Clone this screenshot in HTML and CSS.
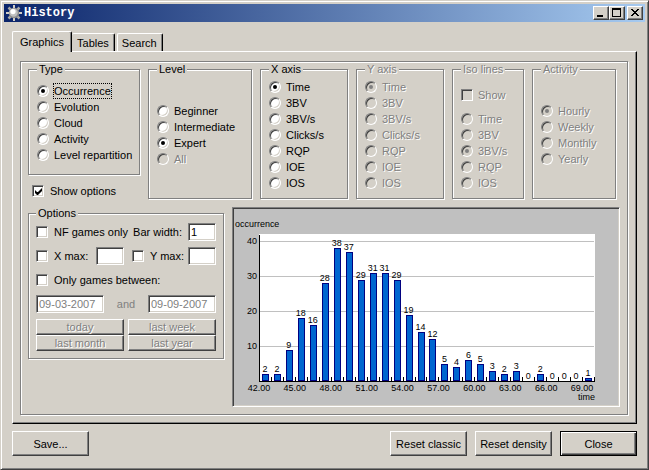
FILE: index.html
```html
<!DOCTYPE html>
<html lang="en">
<head>
<meta charset="utf-8">
<meta name="viewport" content="width=device-width">
<title>History</title>
<link rel="stylesheet" href="styles.css">
</head>
<body>
<main class="window">
  <header class="titlebar">
    <svg class="mine" viewBox="0 0 16 16" aria-hidden="true">
      <path d="M8 0V16M0 8H16" stroke="#d4d0c8" stroke-width="2"/>
      <path d="M2.5 2.5L13.5 13.5M13.5 2.5L2.5 13.5" stroke="#a8a8a8" stroke-width="2.5"/>
      <circle cx="8" cy="8" r="5.2" fill="#8c8c8c"/>
      <circle cx="7.6" cy="7.6" r="4.2" fill="#c0c0c0"/>
      <circle cx="7" cy="6.6" r="2.6" fill="#fff"/>
    </svg>
    <h1 class="title">History</h1>
    <div class="caption-buttons">
      <button class="caption" type="button" aria-label="Minimize"><svg viewBox="0 0 12 10"><path d="M2 7H8V9H2Z"/></svg></button>
      <button class="caption" type="button" aria-label="Maximize"><svg viewBox="0 0 12 10"><path fill-rule="evenodd" d="M1 0H10V9H1ZM2 2V8H9V2Z"/></svg></button>
      <button class="caption caption-close" type="button" aria-label="Close window"><svg viewBox="0 0 12 10"><path d="M2 1H4V2H5V3H7V2H8V1H10V2H9V3H8V4H7V5H8V6H9V7H10V8H8V7H7V6H5V7H4V8H2V7H3V6H4V5H5V4H4V3H3V2H2Z"/></svg></button>
    </div>
  </header>

  <div class="body">
    <div class="tabs" role="tablist">
      <button class="tab tab-active" type="button" role="tab" aria-selected="true">Graphics</button>
      <button class="tab tab-second" type="button" role="tab" aria-selected="false">Tables</button>
      <button class="tab" type="button" role="tab" aria-selected="false">Search</button>
    </div>

    <section class="panel" role="tabpanel">
      <div class="frame">
        <div class="groups">
          <div class="type-column">
            <fieldset class="group group-type">
              <legend>Type</legend>
              <label class="choice"><input type="radio" name="type" checked><span class="focused">Occurrence</span></label>
              <label class="choice"><input type="radio" name="type"><span>Evolution</span></label>
              <label class="choice"><input type="radio" name="type"><span>Cloud</span></label>
              <label class="choice"><input type="radio" name="type"><span>Activity</span></label>
              <label class="choice"><input type="radio" name="type"><span>Level repartition</span></label>
            </fieldset>
            <label class="choice show-options"><input type="checkbox" checked><span>Show options</span></label>
          </div>
          <fieldset class="group">
            <legend>Level</legend>
            <label class="choice"><input type="radio" name="level"><span>Beginner</span></label>
            <label class="choice"><input type="radio" name="level"><span>Intermediate</span></label>
            <label class="choice"><input type="radio" name="level" checked><span>Expert</span></label>
            <label class="choice off"><input type="radio" name="level" disabled><span>All</span></label>
          </fieldset>
          <fieldset class="group">
            <legend>X axis</legend>
            <label class="choice"><input type="radio" name="x" checked><span>Time</span></label>
            <label class="choice"><input type="radio" name="x"><span>3BV</span></label>
            <label class="choice"><input type="radio" name="x"><span>3BV/s</span></label>
            <label class="choice"><input type="radio" name="x"><span>Clicks/s</span></label>
            <label class="choice"><input type="radio" name="x"><span>RQP</span></label>
            <label class="choice"><input type="radio" name="x"><span>IOE</span></label>
            <label class="choice"><input type="radio" name="x"><span>IOS</span></label>
          </fieldset>
          <fieldset class="group off" disabled>
            <legend>Y axis</legend>
            <label class="choice"><input type="radio" name="y" checked><span>Time</span></label>
            <label class="choice"><input type="radio" name="y"><span>3BV</span></label>
            <label class="choice"><input type="radio" name="y"><span>3BV/s</span></label>
            <label class="choice"><input type="radio" name="y"><span>Clicks/s</span></label>
            <label class="choice"><input type="radio" name="y"><span>RQP</span></label>
            <label class="choice"><input type="radio" name="y"><span>IOE</span></label>
            <label class="choice"><input type="radio" name="y"><span>IOS</span></label>
          </fieldset>
          <fieldset class="group group-iso off" disabled>
            <legend>Iso lines</legend>
            <label class="choice iso-show"><input type="checkbox"><span>Show</span></label>
            <label class="choice"><input type="radio" name="iso"><span>Time</span></label>
            <label class="choice"><input type="radio" name="iso"><span>3BV</span></label>
            <label class="choice"><input type="radio" name="iso" checked><span>3BV/s</span></label>
            <label class="choice"><input type="radio" name="iso"><span>RQP</span></label>
            <label class="choice"><input type="radio" name="iso"><span>IOS</span></label>
          </fieldset>
          <fieldset class="group off" disabled>
            <legend>Activity</legend>
            <label class="choice"><input type="radio" name="activity" checked><span>Hourly</span></label>
            <label class="choice"><input type="radio" name="activity"><span>Weekly</span></label>
            <label class="choice"><input type="radio" name="activity"><span>Monthly</span></label>
            <label class="choice"><input type="radio" name="activity"><span>Yearly</span></label>
          </fieldset>
        </div>

        <div class="lower">
          <fieldset class="group group-options">
            <legend>Options</legend>
            <div class="row">
              <label class="choice"><input type="checkbox"><span>NF games only</span></label>
              <label class="bar-width"><span>Bar width:</span><input class="field" type="text" value="1"></label>
            </div>
            <div class="halves">
              <div class="row">
                <label class="choice"><input type="checkbox"><span>X max:</span></label>
                <input class="field" type="text" aria-label="X max value">
              </div>
              <div class="row row-right">
                <label class="choice"><input type="checkbox"><span>Y max:</span></label>
                <input class="field" type="text" aria-label="Y max value">
              </div>
            </div>
            <div class="row">
              <label class="choice"><input type="checkbox"><span>Only games between:</span></label>
            </div>
            <div class="row dates">
              <input class="field date" type="text" value="09-03-2007" aria-label="From date" disabled>
              <span>and</span>
              <input class="field date" type="text" value="09-09-2007" aria-label="To date" disabled>
            </div>
            <div class="halves">
              <button class="button small" type="button" disabled>today</button>
              <button class="button small" type="button" disabled>last week</button>
              <button class="button small" type="button" disabled>last month</button>
              <button class="button small" type="button" disabled>last year</button>
            </div>
          </fieldset>
          <div class="chart-box">
            <svg class="chart" id="chart" viewBox="0 0 385 197" role="img" aria-label="Occurrence by time"></svg>
          </div>
        </div>
      </div>
    </section>

    <footer class="actions">
      <button class="button" type="button">Save...</button>
      <button class="button push" type="button">Reset classic</button>
      <button class="button" type="button">Reset density</button>
      <button class="button default" type="button">Close</button>
    </footer>
  </div>
</main>
<script src="script.js"></script>
</body>
</html>
```
FILE: styles.css
```css
:root {
  --face: #d4d0c8;
  --shadow: #808080;
  --dark: #404040;
}

* {
  box-sizing: border-box;
}

body {
  margin: 0;
  background: var(--face);
  color: #000;
  font: 11px/16px "Liberation Sans", Arial, sans-serif;
}

button,
input {
  margin: 0;
  font: inherit;
  color: inherit;
}

.window {
  min-height: 100vh;
  padding: 3px;
  border: 1px solid;
  border-color: var(--face) var(--dark) var(--dark) var(--face);
  box-shadow: inset 1px 1px #fff, inset -1px -1px var(--shadow);
}

/* Title bar */
.titlebar {
  display: flex;
  align-items: center;
  height: 18px;
  padding: 0 2px;
  background: linear-gradient(90deg, #0a246a, #a6caf0);
}

.mine {
  width: 16px;
  height: 16px;
}

.title {
  margin: 0 auto 0 2px;
  color: #fff;
  font: bold 12px/18px "Liberation Mono", "Courier New", monospace;
}

.caption-buttons {
  display: flex;
}

.caption {
  display: flex;
  width: 16px;
  height: 14px;
  padding: 1px;
  border: 1px solid;
  border-color: #fff var(--dark) var(--dark) #fff;
  background: var(--face);
  box-shadow: inset -1px -1px var(--shadow);
}

.caption svg {
  width: 12px;
  height: 10px;
  shape-rendering: crispEdges;
}

.caption-close {
  margin-left: 2px;
}

/* Tabs */
.body {
  padding: 9px 8px 10px;
}

.tabs {
  display: flex;
  align-items: flex-end;
  height: 20px;
}

.tab {
  height: 18px;
  padding: 0 5px 0 4px;
  border: solid;
  border-width: 1px 1px 0;
  border-color: #fff #000 #fff #fff;
  border-radius: 2px 2px 0 0;
  background: var(--face);
  box-shadow: inset -1px 0 var(--shadow);
  line-height: 18px;
}

.tab-active {
  position: relative;
  height: 21px;
  margin-bottom: -1px;
  padding: 0 7px;
}

.tab-second {
  margin-right: 2px;
  padding: 0 5px;
  border-left-width: 0;
}

.panel {
  padding: 9px 6px 6px 7px;
  border: 1px solid;
  border-color: #fff #000 #000 #fff;
  box-shadow: inset -1px -1px var(--shadow);
}

.frame {
  margin: 0 2px 2px 0;
  padding: 1px 7px 7px;
  border: 1px solid var(--shadow);
  box-shadow: inset 1px 1px #fff, 1px 1px #fff;
}

/* Etched groups */
.groups {
  display: grid;
  grid-template-columns: 112fr 104fr 88fr 88fr 72fr 84fr;
  gap: 8px;
  margin-right: 4px;
}

.group {
  display: flex;
  flex-direction: column;
  justify-content: center;
  min-width: 0;
  margin: 0;
  padding: 3px 0 7px 8px;
  border: 1px solid var(--shadow);
  box-shadow: inset 1px 1px #fff, 1px 1px #fff;
}

.group legend {
  padding: 0 2px;
  background: var(--face);
  line-height: 13px;
}

.group-type {
  padding: 7px 0 11px 8px;
}

.group-iso {
  justify-content: flex-end;
}

.iso-show {
  margin-bottom: 8px;
}

.off {
  color: var(--shadow);
  text-shadow: 1px 1px #fff;
}

.choice {
  display: flex;
  align-items: center;
  gap: 5px;
  height: 16px;
  white-space: nowrap;
}

.show-options {
  gap: 6px;
  margin: 8px 0 0 4px;
}

.focused {
  outline: 1px dotted #000;
  line-height: 14px;
}

/* Radios and tick boxes */
input[type="radio"],
input[type="checkbox"] {
  flex: none;
  width: 12px;
  height: 12px;
  appearance: none;
  border: 1px solid;
  border-color: var(--shadow) #fff #fff var(--shadow);
  background: #fff;
  box-shadow: inset 1px 1px var(--dark), inset -1px -1px var(--face);
}

input[type="radio"] {
  border-radius: 50%;
}

input:disabled[type="radio"],
input:disabled[type="checkbox"] {
  background: var(--face);
}

input[type="radio"]:checked::before {
  content: "";
  display: block;
  width: 4px;
  height: 4px;
  margin: 3px;
  border-radius: 50%;
  background: #000;
}

input[type="radio"]:checked:disabled::before {
  background: var(--shadow);
}

input[type="checkbox"]:checked::before {
  content: "";
  display: block;
  width: 7px;
  height: 7px;
  margin: 2px;
  background: #000;
  clip-path: polygon(0 2px, 2px 4px, 3px 4px, 7px 0, 7px 3px, 3px 7px, 2px 7px, 0 5px);
}

/* Options and chart */
.lower {
  display: grid;
  grid-template-columns: 196px 1fr;
  align-items: start;
  gap: 8px;
  margin-top: 8px;
}

.group-options {
  gap: 6px;
  padding: 3px 7px 7px;
}

.row {
  display: flex;
  align-items: center;
  justify-content: space-between;
  height: 18px;
}

.row .choice {
  gap: 6px;
}

.row-right {
  padding-left: 4px;
}

.halves {
  display: grid;
  grid-template-columns: 1fr 1fr;
  column-gap: 4px;
}

.bar-width {
  display: flex;
  align-items: center;
  gap: 6px;
}

.field {
  width: 28px;
  height: 18px;
  padding: 0 2px;
  border: 1px solid;
  border-color: var(--shadow) #fff #fff var(--shadow);
  border-radius: 0;
  background: #fff;
  box-shadow: inset 1px 1px var(--dark), inset -1px -1px var(--face);
}

.date {
  width: 68px;
}

.dates {
  color: var(--shadow);
}

.button {
  width: 77px;
  height: 25px;
  padding: 0;
  border: 1px solid;
  border-color: #fff var(--dark) var(--dark) #fff;
  border-radius: 0;
  background: var(--face);
  box-shadow: inset -1px -1px var(--shadow);
}

.button:disabled {
  color: var(--shadow);
  text-shadow: 1px 1px #fff;
}

.small {
  width: auto;
  height: 16px;
  line-height: 13px;
}

.default {
  border-color: #000;
  box-shadow: inset 1px 1px #fff, inset -1px -1px var(--dark), inset -2px -2px var(--shadow);
}

.chart-box {
  border: 1px solid;
  border-color: var(--shadow) #fff #fff var(--shadow);
  padding: 1px;
  background: #c0c0c0;
  box-shadow: inset 1px 1px var(--dark), inset -1px -1px var(--face);
}

.chart {
  display: block;
  width: 100%;
  font-size: 9px;
  shape-rendering: crispEdges;
}

.plot {
  fill: #fff;
}

.grid {
  fill: #c0c0c0;
}

.axis {
  fill: #000;
}

.bar {
  fill: #0066d0;
  stroke: #000080;
}

.middle {
  text-anchor: middle;
}

.end {
  text-anchor: end;
}

.actions {
  display: flex;
  gap: 8px;
  margin-top: 7px;
}

.push {
  margin-left: auto;
}
```
FILE: script.js
```js
const chart = document.getElementById("chart");
const counts = [2, 2, 9, 18, 16, 28, 38, 37, 29, 31, 31, 29, 19, 14, 12,
  5, 4, 6, 5, 3, 2, 3, 0, 2, 0, 0, 0, 1];

// Plot area inside the chart, in viewBox units.
const left = 25, top_ = 25, right = 362, base = 172;
const step = (right - 1 - left) / 28;
const perUnit = 3.5;

function add(name, attrs, text) {
  const el = document.createElementNS("http://www.w3.org/2000/svg", name);
  for (const key in attrs) el.setAttribute(key, attrs[key]);
  if (text !== undefined) el.textContent = text;
  chart.appendChild(el);
}

function box(cls, x, y, width, height) {
  add("rect", { class: cls, x, y, width, height });
}

function label(cls, x, y, text) {
  add("text", { class: cls, x, y }, text);
}

box("plot", left, top_, right - left, base - top_);
for (let v = 10; v <= 40; v += 10) {
  const y = Math.round(base - v * perUnit);
  box("grid", left, y, right - 1 - left, 1);
  label("end", left - 2, y + 3, v);
}
box("axis", left, top_ + 1, 1, base - top_);

counts.forEach((n, i) => {
  const x = Math.round(left + i * step);
  const y = Math.round(base - n * perUnit);
  box("axis", Math.round(left + (i + 1) * step), base - 4, 1, 4);
  if (n) add("rect", { class: "bar", x: x + 3.5, y: y + 0.5, width: 6, height: base - y - 0.5 });
  label("middle", x + 6, y - 2, n);
  if (i % 3 === 0) label("middle", x, base + 10, (42 + i) + ".00");
});
box("axis", left, base, right - left, 1);

label("start", 1, 18, "occurrence");
label("end", right, base + 20, "time");
```
